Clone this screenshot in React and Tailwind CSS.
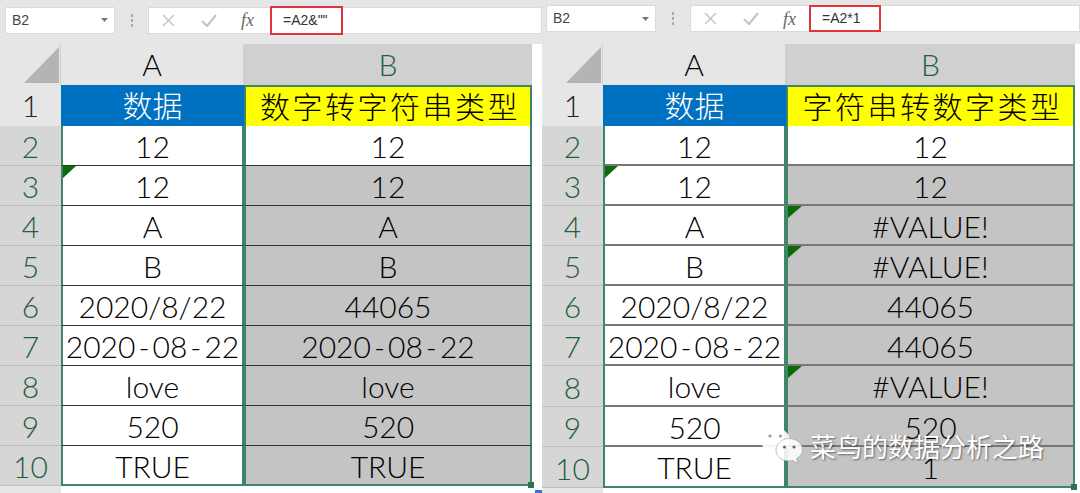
const FONT = 'Lato,"Noto Sans CJK SC",sans-serif';

const left = {
  formula: '=A2&""',
  redW: 'w-[73px]',
  fxW: 'w-[121px]',
  redH: 'h-[29px]',
  pb: 'pb-[4px]',
  pl: 'pl-[5px]',
  dots: 'w-[33px]',
  nameH: 'h-[27px]',
  line: 'border-b border-b-[#333]',
  lastLine: 'border-b-2 border-b-[#3f8567]',
  tall: [],
  title: '数字转字符串类型',
  rows: [
    ['12', '12', 0, 0],
    ['12', '12', 1, 0],
    ['A', 'A', 0, 0],
    ['B', 'B', 0, 0],
    ['2020/8/22', '44065', 0, 0],
    ['2020-08-22', '2020-08-22', 0, 0],
    ['love', 'love', 0, 0],
    ['520', '520', 0, 0],
    ['TRUE', 'TRUE', 0, 0],
  ],
};

const right = {
  formula: '=A2*1',
  redW: 'w-[72px]',
  fxW: 'w-[118px]',
  redH: 'h-[27px]',
  pb: 'pb-[7px]',
  pl: 'pl-[4px]',
  dots: 'w-[34px]',
  nameH: 'h-[27px]',
  line: 'border-b-2 border-b-[#777]',
  lastLine: 'border-b-2 border-b-[#3f8567]',
  tall: [6, 8],
  title: '字符串转数字类型',
  rows: [
    ['12', '12', 0, 0],
    ['12', '12', 1, 0],
    ['A', '#VALUE!', 0, 1],
    ['B', '#VALUE!', 0, 1],
    ['2020/8/22', '44065', 0, 0],
    ['2020-08-22', '44065', 0, 0],
    ['love', '#VALUE!', 0, 1],
    ['520', '520', 0, 0],
    ['TRUE', '1', 0, 0],
  ],
};

function Flag({ large }) {
  return (
    <svg width="14" height="13" viewBox="0 0 14 13" className="absolute left-0 top-0">
      <path d={large ? 'M0 0H14L0 12Z' : 'M0 0H13L0 12Z'} fill="#0b6b0b" />
    </svg>
  );
}

function CellText({ text }) {
  if (!text.includes('-')) return text;
  const parts = text.split('-');
  return (
    <span className="whitespace-nowrap">
      {parts.map((p, i) => (
        <span key={i}>
          {i > 0 ? <span className="mx-[3px]">-</span> : null}
          {p}
        </span>
      ))}
    </span>
  );
}

function FormulaBar({ d }) {
  return (
    <div className={`h-[44px] bg-[#e6e6e6] flex items-center ${d.pl} ${d.pb}`}>
      <div className={`w-[110px] shrink-0 ${d.nameH} bg-white border border-[#dadada] flex items-center justify-between pl-[6px] pr-[6px]`}>
        <span className="text-[14px] text-[#444]" style={{ fontFamily: 'Liberation Sans' }}>B2</span>
        <svg width="7" height="4" viewBox="0 0 7 4"><path d="M0 0H7L3.500 4Z" fill="#777" /></svg>
      </div>
      <div className={`${d.dots} shrink-0 flex flex-col items-center gap-[2px]`}>
        <span className="w-[2px] h-[3px] bg-[#aaa]" />
        <span className="w-[2px] h-[3px] bg-[#aaa]" />
        <span className="w-[2px] h-[3px] bg-[#aaa]" />
      </div>
      <div className="flex-1 h-[27px] bg-white border border-[#dadada] flex items-center">
        <div className={`${d.fxW} flex items-center pl-[13px] shrink-0`}>
          <svg width="13" height="13" viewBox="0 0 13 13"><path d="M1 1L12 12M12 1L1 12" stroke="#c4c4c4" strokeWidth="1.400" fill="none" /></svg>
          <svg width="16" height="13" viewBox="0 0 16 13" className="ml-[26px]"><path d="M1 7L6 12L15 1" stroke="#c4c4c4" strokeWidth="2.200" fill="none" /></svg>
          <span className="ml-[24px] text-[18px] italic text-[#666] leading-none" style={{ fontFamily: 'Liberation Serif' }}>fx</span>
        </div>
        <div className={`${d.redW} ${d.redH} -my-[2px] shrink-0 border-[2px] border-[#e5323b] flex items-center pl-[11px] text-[14px] text-[#333]`} style={{ fontFamily: 'Liberation Sans' }}>
          {d.formula}
        </div>
      </div>
    </div>
  );
}

function Panel({ d, w, colB }) {
  return (
    <div className={`${w} shrink-0 h-[493px] flex flex-col overflow-hidden font-light`} style={{ fontFamily: FONT }}>
      <FormulaBar d={d} />
      <div className="flex h-[41px]">
        <div className="w-[61px] shrink-0 relative bg-[#e6e6e6] border-r border-[#cfcfcf]">
          <svg width="36" height="36" viewBox="0 0 36 36" className="absolute left-[24px] top-[3px]"><path d="M35 0V36H0Z" fill="#b4b4b4" /></svg>
        </div>
        <div className="w-[183px] shrink-0 bg-[#e6e6e6] flex items-center justify-center text-[30px] text-black border-r border-[#cfcfcf]">A</div>
        <div className={`${colB} shrink-0 flex items-center justify-center text-[30px] text-[#1f5f3e] bg-[#d0d0d0]`}>B</div>
        <div className="flex-1 bg-white" />
      </div>
      <div className="flex h-[41px]">
        <div className="w-[61px] shrink-0 bg-[#e6e6e6] flex items-center justify-center text-[30px] text-[#222]">1</div>
        <div className="w-[183px] shrink-0 bg-[#0070c0] text-white flex items-center justify-center text-[30px]">数据</div>
        <div className={`${colB} shrink-0 bg-[#ffff00] text-black flex items-center justify-center pl-[4px] text-[30px] tracking-[2.500px] border-t-2 border-x-2 border-[#3f8567]`}>{d.title}</div>
        <div className="flex-1 bg-white" />
      </div>
      {d.rows.map((r, i) => {
        const line = i < 8 ? d.line : d.lastLine;
        const h = d.tall.includes(i) ? 'h-[41px]' : 'h-[40px]';
        return (
          <div key={i} className={`flex ${h}`}>
            <div className="w-[61px] shrink-0 pt-[2px] bg-[#d6d6d6] border-b border-[#bdbdbd] flex items-center justify-center text-[30px] text-[#1f5f3e]">{i + 2}</div>
            <div className={`w-[183px] shrink-0 pt-[2px] bg-white relative flex items-center justify-center text-[30px] text-black border-x-2 border-x-[#3f8567] ${line}`}>
              {r[2] ? <Flag /> : null}
              <CellText text={r[0]} />
            </div>
            <div className={`${colB} shrink-0 pt-[2px] relative flex items-center justify-center text-[30px] text-black border-x-2 border-x-[#3f8567] ${i === 0 ? 'bg-white' : 'bg-[#c4c4c4]'} ${line}`}>
              {r[3] ? <Flag large /> : null}
              <CellText text={r[1]} />
              {i === 8 ? <span className="absolute -right-[4px] -bottom-[4px] w-[6px] h-[6px] bg-[#2f6f52]" /> : null}
            </div>
            <div className="flex-1 bg-white" />
          </div>
        );
      })}
      <div className="flex-1 flex bg-[#f0f0f0]">
        <div className="w-[61px] shrink-0 bg-[#e6e6e6]" />
        <div className="flex-1 bg-white" />
      </div>
    </div>
  );
}

function Watermark() {
  return (
    <div className="absolute left-[760px] top-[427px] flex items-center gap-[7px] text-white" style={{ textShadow: '1px 1px 2px rgba(0,0,0,.5)' }}>
      <svg width="43" height="37" viewBox="0 0 43 37">
        <path d="M15 0.500C7 0.500 0.500 6 0.500 13C0.500 17 3 20.500 6 22.500L4.500 27L11 25C12 25.300 13.500 25.500 15 25.500C23 25.500 29.500 20 29.500 13C29.500 6 23 0.500 15 0.500Z" fill="#fff" fillOpacity=".92" />
        <path d="M29 11.500C22 11.500 16 16.500 16 23C16 29.500 22 34 29 34C30.500 34 32 33.800 33 33.500L38 36.500L36.500 31.500C40 29.500 42.500 26.500 42.500 23C42.500 16.500 36.500 11.500 29 11.500Z" fill="#fff" fillOpacity=".88" stroke="#999" strokeWidth=".6" />
        <circle cx="10" cy="9" r="1.600" fill="#999" />
        <circle cx="20.500" cy="9" r="1.600" fill="#999" />
        <circle cx="24.500" cy="20" r="1.600" fill="#666" />
        <circle cx="34" cy="20" r="1.600" fill="#666" />
      </svg>
      <span className="text-[26px] leading-none whitespace-nowrap" style={{ fontFamily: '"Noto Sans CJK SC",sans-serif' }}>菜鸟的数据分析之路</span>
    </div>
  );
}

export default function App() {
  return (
    <div className="w-[1080px] h-[493px] relative flex overflow-hidden bg-white">
      <Panel d={left} w="w-[542px]" colB="w-[288px]" />
      <Panel d={right} w="w-[538px]" colB="w-[289px]" />
      <span className="absolute left-[535px] top-[490px] w-[7px] h-[3px] bg-[#3b6fd4]" />
      <Watermark />
    </div>
  );
}
